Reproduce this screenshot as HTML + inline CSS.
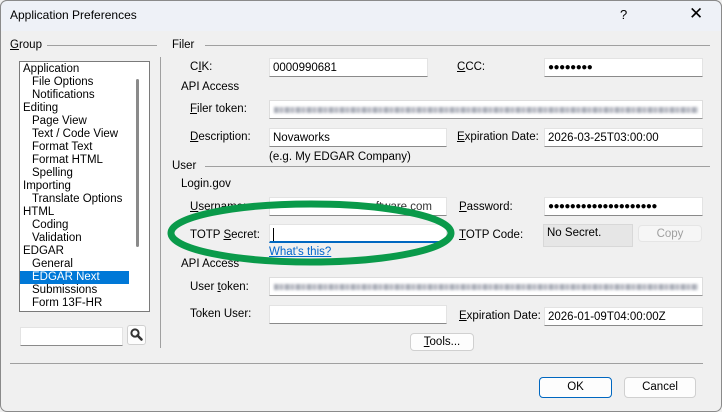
<!DOCTYPE html>
<html><head><meta charset="utf-8"><style>
*{box-sizing:border-box;margin:0;padding:0}
body{width:722px;height:412px;overflow:hidden;background:#f0f0f0;font-family:"Liberation Sans",sans-serif;font-size:11.5px;color:#000;position:relative}
.a{position:absolute;white-space:nowrap}
.t{margin-top:1px}
.title{left:0;top:0;width:722px;height:31px;background:#eef1f7;border:1px solid #8a8a8a;border-bottom:none;border-radius:7px 7px 0 0}
.in{position:absolute;background:#fff;border:1px solid #e3e3e3;border-bottom:1px solid #8a8a8a;padding:2px 3px;line-height:14px}
.line{position:absolute;height:1px;background:#a0a0a0}
.blur{position:absolute;left:4px;right:4px;top:6px;height:6px;background:repeating-linear-gradient(90deg,#a8acb6 0 4px,#cdd0d6 4px 6px,#b8bac2 6px 9px,#dcdce2 9px 11px);filter:blur(1.2px)}
.btn{position:absolute;background:#fdfdfd;border:1px solid #d0d0d0;border-radius:4px;text-align:center;line-height:17px}
.list div{height:13px;line-height:13px;padding-left:3px}
.list .s{padding-left:12px}
u{text-decoration:underline}
</style></head><body>
<div class="a" style="left:0;top:0;width:722px;height:412px;border:1px solid #8a8a8a;border-radius:7px"></div>
<div class="a title"></div>
<div class="a" style="left:10px;top:8px;font-size:12px">Application Preferences</div>
<div class="a" style="left:620px;top:7px;font-size:13px">?</div>
<div class="a" style="left:689px;top:4px;font-size:17px;font-weight:300">✕</div>

<div class="a" style="left:10px;top:39px"><u>G</u>roup</div>
<div class="line" style="left:47px;top:45px;width:110px"></div>
<div class="a" style="left:160px;top:57px;width:1px;height:291px;background:#a0a0a0"></div>
<div class="a list" style="left:19px;top:61px;width:131px;height:251px;background:#fff;border:1px solid #7a7a7a;padding-top:1px">
<div>Application</div><div class="s">File Options</div><div class="s">Notifications</div><div>Editing</div><div class="s">Page View</div><div class="s">Text / Code View</div><div class="s">Format Text</div><div class="s">Format HTML</div><div class="s">Spelling</div><div>Importing</div><div class="s">Translate Options</div><div>HTML</div><div class="s">Coding</div><div class="s">Validation</div><div>EDGAR</div><div class="s">General</div><div class="s" style="background:#0078d7;color:#fff;width:109px">EDGAR Next</div><div class="s">Submissions</div><div class="s">Form 13F-HR</div>
</div>
<div class="a" style="left:136px;top:79px;width:3px;height:168px;background:#8a8a8a;border-radius:2px"></div>
<div class="in" style="left:20px;top:327px;width:103px;height:19px"></div>
<div class="btn" style="left:127px;top:325px;width:19px;height:20px;border-radius:3px"><svg width="17" height="18" viewBox="0 0 17 18"><circle cx="7" cy="7" r="3.6" fill="none" stroke="#333" stroke-width="2"/><path d="M9.5 9.5l4 4" stroke="#333" stroke-width="2.6" stroke-linecap="round"/></svg></div>

<div class="a" style="left:172px;top:39px">Filer</div>
<div class="line" style="left:205px;top:45px;width:505px"></div>
<div class="a" style="left:190px;top:61px">C<u>I</u>K:</div>
<div class="in" style="left:269px;top:58px;width:159px;height:19px">0000990681</div>
<div class="a" style="left:457px;top:61px"><u>C</u>CC:</div>
<div class="in" style="left:544px;top:58px;width:159px;height:19px;font-size:10px;letter-spacing:-0.5px">●●●●●●●●</div>
<div class="a" style="left:181px;top:81px">API Access</div>
<div class="a" style="left:190px;top:103px"><u>F</u>iler token:</div>
<div class="in" style="left:269px;top:100px;width:434px;height:19px;border-color:#ddd;border-bottom-color:#999"><div class="blur"></div></div>
<div class="a" style="left:190px;top:131px"><u>D</u>escription:</div>
<div class="in" style="left:269px;top:128px;width:178px;height:19px">Novaworks</div>
<div class="a" style="left:457px;top:131px"><u>E</u>xpiration Date:</div>
<div class="in" style="left:544px;top:128px;width:159px;height:19px">2026-03-25T03:00:00</div>
<div class="a" style="left:269px;top:151px">(e.g. My EDGAR Company)</div>

<div class="a" style="left:172px;top:160px">User</div>
<div class="line" style="left:205px;top:166px;width:505px"></div>
<div class="a" style="left:181px;top:178px">Login.gov</div>
<div class="a" style="left:190px;top:201px"><u>U</u>sername:</div>
<div class="in" style="left:269px;top:197px;width:178px;height:19px;color:#333;text-align:right;padding-right:14px">ftware.com</div>
<div class="a" style="left:459px;top:201px"><u>P</u>assword:</div>
<div class="in" style="left:544px;top:197px;width:159px;height:19px;font-size:10px;letter-spacing:-0.6px">●●●●●●●●●●●●●●●●●●●●</div>
<div class="a" style="left:190px;top:229px">TOTP <u>S</u>ecret:</div>
<div class="in" style="left:269px;top:224px;width:178px;height:19px;border-bottom:2px solid #0067c0"><span style="display:inline-block;width:1px;height:13px;background:#000;margin-top:1px"></span></div>
<div class="a" style="left:459px;top:229px"><u>T</u>OTP Code:</div>
<div class="a" style="left:543px;top:224px;width:90px;height:23px;background:#e6e6e6;border:1px solid #d8d8d8;padding:2px 3px">No Secret.</div>
<div class="btn" style="left:638px;top:225px;width:64px;height:17px;color:#a0a0a0;background:#f6f6f6;border-color:#e5e5e5">Copy</div>
<div class="a" style="left:269px;top:246px;color:#0066cc;text-decoration:underline">What's this?</div>
<div class="a" style="left:181px;top:258px">API Access</div>
<div class="a" style="left:190px;top:281px">User <u>t</u>oken:</div>
<div class="in" style="left:269px;top:277px;width:434px;height:19px;border-color:#ddd;border-bottom-color:#999"><div class="blur"></div></div>
<div class="a" style="left:190px;top:308px">Token User:</div>
<div class="in" style="left:269px;top:305px;width:178px;height:19px"></div>
<div class="a" style="left:459px;top:310px"><u>E</u>xpiration Date:</div>
<div class="in" style="left:544px;top:307px;width:159px;height:19px">2026-01-09T04:00:00Z</div>
<div class="btn" style="left:410px;top:333px;width:64px;height:18px"><u>T</u>ools...</div>

<svg class="a" style="left:0;top:0" width="722" height="412"><ellipse cx="311" cy="233" rx="140" ry="29" fill="none" stroke="#0a9a4a" stroke-width="7"/></svg>

<div class="line" style="left:10px;top:363px;width:693px"></div>
<div class="btn" style="left:539px;top:377px;width:73px;height:21px;line-height:19px;border:1px solid #0067c0">OK</div>
<div class="btn" style="left:624px;top:377px;width:72px;height:21px;line-height:19px">Cancel</div>
</body></html>
